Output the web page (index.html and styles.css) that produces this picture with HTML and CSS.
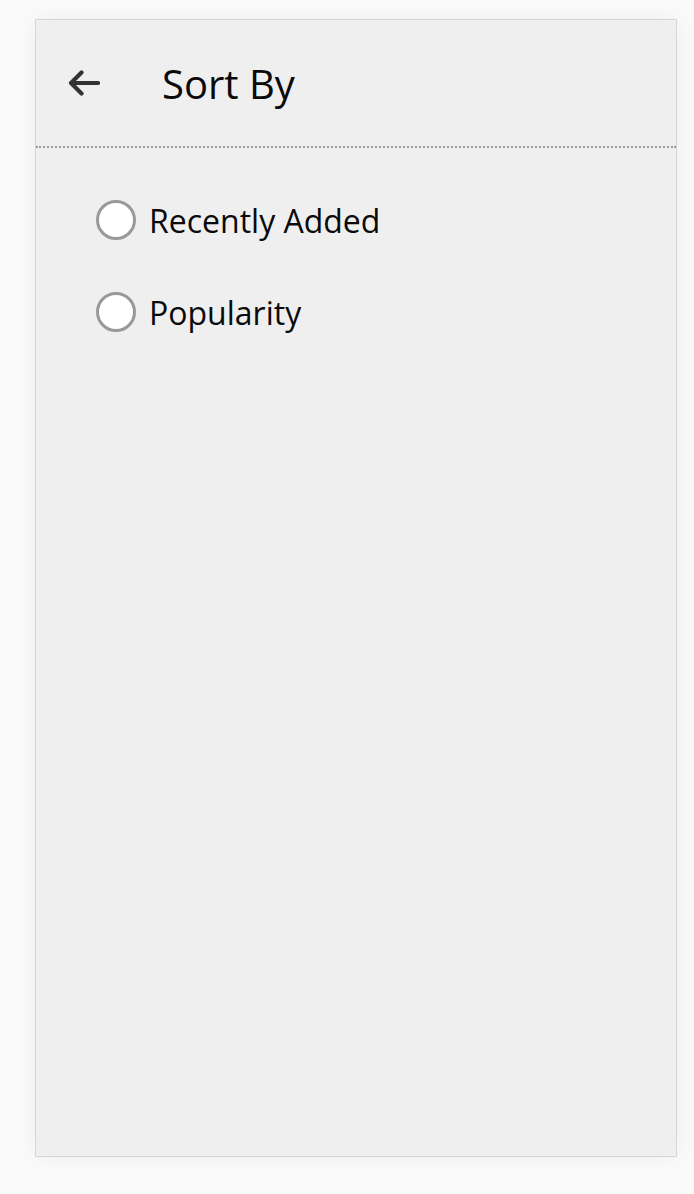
FILE: index.html
```html
<!DOCTYPE html>
<html lang="en">
<head>
    <meta charset="UTF-8">
    <meta name="viewport" content="width=device-width, initial-scale=1.0">
    <title>Sort By</title>
    <link rel="stylesheet" href="styles.css">
</head>
<body>
    <div class="panel">
        <div class="header">
            <button class="back" aria-label="Back">
                <svg width="32" height="28" viewBox="0 0 32 28">
                    <path d="M30 14H4.5M13.5 3.5L3 14L13.5 24.5" fill="none" stroke="#333" stroke-width="4.2" stroke-linecap="round" stroke-linejoin="round"/>
                </svg>
            </button>
            <h1 class="title">Sort By</h1>
        </div>
        <div class="options">
            <label class="option">
                <span class="radio"></span>
                <span class="label">Recently Added</span>
            </label>
            <label class="option">
                <span class="radio"></span>
                <span class="label">Popularity</span>
            </label>
        </div>
    </div>
</body>
</html>
```

FILE: styles.css
```css
body {
    font-family: "Open Sans", "Liberation Sans", sans-serif;
    background-color: #fafafa;
    margin: 0;
    padding: 19px 17px 37px 35px;
}

.panel {
    background-color: #efefef;
    border: 1px solid #d6d6d6;
    height: 1136px;
    box-shadow: 0 0 24px rgba(0, 0, 0, 0.05);
}

.header {
    display: flex;
    align-items: center;
    height: 126px;
    padding-left: 32px;
    border-bottom: 2px dotted #9a9a9a;
}

.back {
    background: none;
    border: none;
    padding: 0;
    display: flex;
    cursor: pointer;
}

.title {
    margin: 0 0 0 62px;
    font-size: 40px;
    font-weight: 400;
    color: #0a0a0a;
}

.options {
    display: flex;
    flex-direction: column;
    gap: 52px;
    padding: 52px 0 0 60px;
}

.option {
    display: flex;
    align-items: center;
    height: 40px;
    cursor: pointer;
}

.radio {
    width: 34px;
    height: 34px;
    border: 3px solid #999;
    border-radius: 50%;
    background-color: #fff;
}

.label {
    margin-left: 13px;
    font-size: 32px;
    color: #0a0a0a;
}
```
